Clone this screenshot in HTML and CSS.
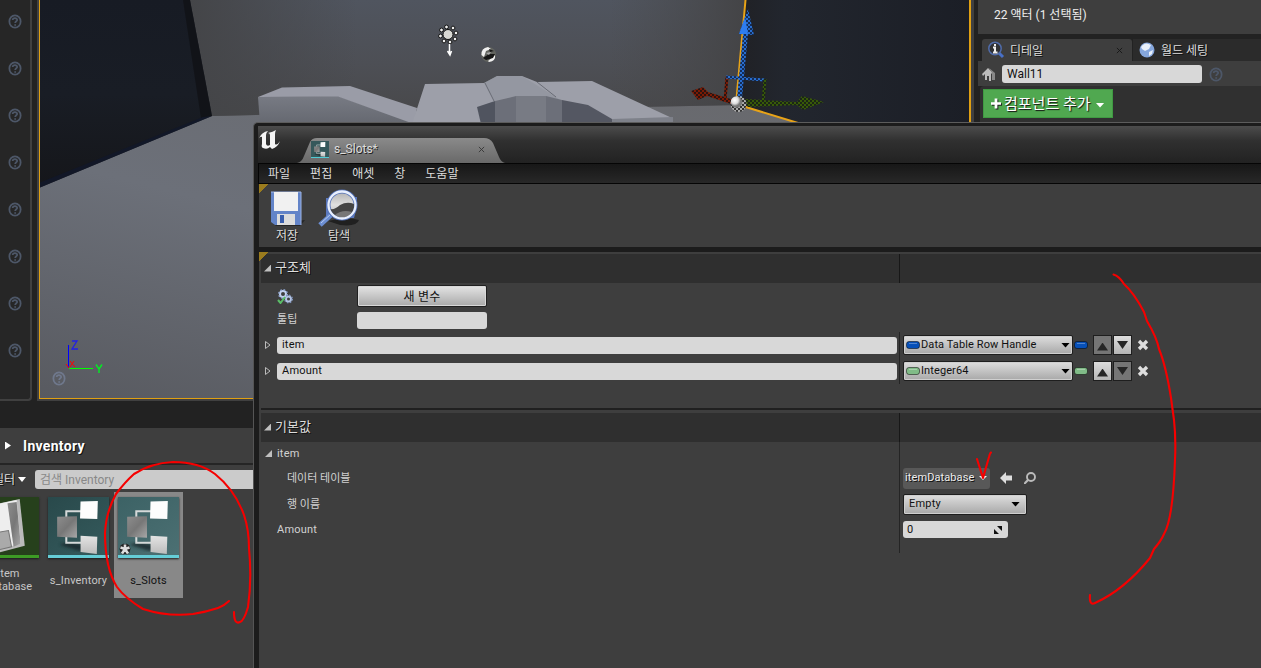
FILE: index.html
```html
<!DOCTYPE html>
<html lang="ko">
<head>
<meta charset="utf-8">
<title>s_Slots</title>
<link rel="stylesheet" href="styles.css">
</head>
<body>
<svg class="defs" width="0" height="0">
  <defs>
    <symbol id="help" viewBox="0 0 14 16"><ellipse cx="7" cy="8" rx="6" ry="6.600" fill="none" stroke="currentColor" stroke-width="1.900"/><path d="M4.500 6.400C4.700 3.800 9.500 3.900 9.300 6.400C9.200 7.900 7.200 7.700 7.200 9.700M7.200 10.800V12.500" fill="none" stroke="currentColor" stroke-width="1.900"/></symbol>
    <linearGradient id="node" x2="1" y2="1"><stop stop-color="#8d8d8d"/><stop offset=".5" stop-color="#777"/><stop offset="1" stop-color="#a8a8a8"/></linearGradient>
    <linearGradient id="pale" x2="0" y2="1"><stop stop-color="#e4e4e4"/><stop offset="1" stop-color="#bcbcbc"/></linearGradient>
    <filter id="soft"><feGaussianBlur stdDeviation="1.5"/></filter>
    <symbol id="struct" viewBox="0 0 60 57">
      <path d="M11 47Q21 42 39 49L31 53Z" fill="#142426" opacity=".75" filter="url(#soft)"/>
      <path d="M18 22V14H33M18 37V45H33" fill="none" stroke="#d5d9d9" stroke-width="2"/>
      <path d="M9 19.500L28.500 19L28.500 40L9 39Z" fill="url(#node)"/>
      <path d="M32 4.500L49 4L48.500 21.500L31.500 21Z" fill="#fdfdfd"/>
      <path d="M32 38L48.500 39L48 56L32 54Z" fill="url(#pale)"/>
    </symbol>
    <symbol id="pill" viewBox="0 0 14 8"><rect x=".5" y=".5" width="13" height="7" rx="2.500" fill="currentColor" stroke="#000" stroke-opacity=".5"/><path d="M3 2.500H11" stroke="#fff" stroke-opacity=".3"/></symbol>
    <symbol id="cross" viewBox="0 0 12 12"><path d="M2 2L10 10M10 2L2 10" stroke="#dedede" stroke-width="3.300"/></symbol>
  </defs>
</svg>
<main class="desktop">
  <div class="upper">
    <aside class="rail">
      <svg><use href="#help"/></svg><svg><use href="#help"/></svg><svg><use href="#help"/></svg><svg><use href="#help"/></svg><svg><use href="#help"/></svg><svg><use href="#help"/></svg><svg><use href="#help"/></svg><svg><use href="#help"/></svg>
    </aside>
    <section class="viewport">
      <svg class="scene" viewBox="40 0 929 398">
        <defs>
          <linearGradient id="back" x2="0" y2="1"><stop stop-color="#50555f"/><stop offset=".55" stop-color="#4d4f55"/><stop offset="1" stop-color="#48484a"/></linearGradient>
          <linearGradient id="backside" x2="1" y2="0"><stop stop-color="#444548"/><stop offset=".3" stop-color="#444548" stop-opacity="0"/><stop offset=".75" stop-color="#49494b" stop-opacity="0"/><stop offset="1" stop-color="#434345"/></linearGradient>
          <linearGradient id="leftwall" x2="0" y2="1"><stop stop-color="#171b24"/><stop offset=".5" stop-color="#191d25"/><stop offset="1" stop-color="#15161a"/></linearGradient>
          <linearGradient id="rightwall" x2="1" y2="0"><stop stop-color="#202125"/><stop offset=".2" stop-color="#22262e"/><stop offset="1" stop-color="#1b1e26"/></linearGradient>
          <linearGradient id="floor" x1=".8" x2="0" y1="0" y2="1"><stop stop-color="#68696d"/><stop offset=".5" stop-color="#6c7079"/><stop offset="1" stop-color="#585a60"/></linearGradient>
          <linearGradient id="box" x2="0" y2="1"><stop stop-color="#787b84"/><stop offset="1" stop-color="#656870"/></linearGradient>
          <pattern id="chkBlue" width="4" height="4" patternUnits="userSpaceOnUse"><path fill="#142d58" d="M0 0H4V4H0Z"/><path fill="#286ed0" d="M0 0H2V2H0ZM2 2H4V4H2Z"/></pattern>
          <pattern id="chkRed" width="4" height="4" patternUnits="userSpaceOnUse"><path fill="#2b1310" d="M0 0H4V4H0Z"/><path fill="#7b1b05" d="M0 0H2V2H0ZM2 2H4V4H2Z"/></pattern>
          <pattern id="chkGreen" width="4" height="4" patternUnits="userSpaceOnUse"><path fill="#1b2616" d="M0 0H4V4H0Z"/><path fill="#385a08" d="M0 0H2V2H0ZM2 2H4V4H2Z"/></pattern>
          <pattern id="chkGray" width="4" height="4" patternUnits="userSpaceOnUse"><path fill="#333" d="M0 0H4V4H0Z"/><path fill="#aaa" d="M0 0H2V2H0ZM2 2H4V4H2Z"/></pattern>
          <radialGradient id="orb" cx=".35" cy=".35"><stop stop-color="#fff"/><stop offset=".6" stop-color="#ddd"/><stop offset="1" stop-color="#777"/></radialGradient>
        </defs>
        <path fill="url(#floor)" d="M39 105H971V398H39Z"/>
        <path fill="url(#back)" d="M189 0H750L738 105L640 107L212 116Z"/>
        <path fill="url(#backside)" d="M189 0H750L738 105L640 107L212 116Z"/>
        <path fill="url(#leftwall)" d="M39 0H190L212 116L39 188Z"/>
        <path fill="#101115" d="M183 0H190L212 116L201 118Z" opacity=".8"/>
        <path fill="#11182a" d="M39 183L203 117L212 116L39 188Z" opacity=".8"/>
        <path fill="url(#rightwall)" d="M745 0H971V124H800L738 104Z"/>
        <path fill="url(#box)" d="M258 97L338 96L416 124H260Z"/>
        <path fill="#9a9ca7" d="M258 97L282 87.500L350 86L417 108L414 124L338 96.500Z"/>
        <path fill="#9d9fa9" d="M425 84L484 83L497 76H522L537 82L592 81L672 118V124H412Z"/>
        <path fill="#8a8d97" d="M484 83L497 76H522L562 101L545 96H516L494 101Z" opacity=".45"/>
        <path d="M485 83L494 101M537 82L556 97" stroke="#696c75" fill="none"/>
        <path fill="#50545f" d="M477 107L495 101V124H481Z"/>
        <path fill="#6c6f79" d="M495 101L516 96H546L562 100V124H495Z"/>
        <path fill="#787b84" d="M516 96H546V124H516Z"/>
        <path fill="#545762" d="M562 100L588 105L612 119V124H562Z"/>
        <path fill="#7e818a" d="M612 119L673 117V124H612Z"/>
        <path d="M745.500 0L736 104L798 123" fill="none" stroke="#e8a317" stroke-width="2"/>
        <g stroke="#111" stroke-width="1"><circle cx="448" cy="34.500" r="5" fill="#d8d8d4"/>
          <g fill="#eee"><circle cx="446.500" cy="27" r="1.900"/><circle cx="453" cy="28" r="1.900"/><circle cx="456" cy="33" r="1.900"/><circle cx="455" cy="39" r="1.900"/><circle cx="450" cy="42" r="1.900"/><circle cx="444" cy="41" r="1.900"/><circle cx="440.500" cy="36" r="1.900"/><circle cx="441.500" cy="30" r="1.900"/></g></g>
        <path d="M449.500 44V54M447.500 51L450 55L451.500 51" stroke="#fff" fill="none" stroke-width="1.500"/>
        <circle cx="488.500" cy="54.500" r="7.500" fill="#62645f"/><path d="M481.500 55Q481 48 488 47L491 49L486 51L484 57ZM488 61L495 55Q496 61 489 62Z" fill="#f0f0f0"/><path d="M483 58L489 54H495L493 58L486 60ZM489 49L494 51L490 52Z" fill="#161616"/><path d="M486 53L491 52L489 55Z" fill="#aaa"/>
        <g fill="none" stroke-width="3"><path d="M725 100L727 77" stroke="url(#chkRed)"/><path d="M726 77L765 80" stroke="url(#chkBlue)" /><path d="M765 79L763 103" stroke="url(#chkGreen)"/></g>
        <path fill="url(#chkRed)" d="M691 91L703 87L708 92L734 100L731 104L707 96L698 100Z"/>
        <path fill="url(#chkGreen)" d="M745 99L797 102L802 96L824 102L803 110L797 105L748 107Z"/>
        <path fill="url(#chkBlue)" d="M743 34H748L742 98H737ZM739 34L748 9L754 35Z"/><path fill="#2e7df0" d="M739 34L745 17L748 34Z"/>
        <circle cx="738.500" cy="104" r="8" fill="url(#chkGray)"/><circle cx="736.500" cy="102" r="5.800" fill="url(#orb)"/>
        <path d="M68.500 345V368" stroke="#00f"/><path d="M69 368.500H93" stroke="#0f0"/><path d="M66 364L69 368M70 367L74 361M70 361L75 367" stroke="red"/><path d="M72 341H77L72 349H78" fill="none" stroke="#2020e8" stroke-width="1.300"/><path d="M96 364.500L99 369V373M102 364.500L99 369" fill="none" stroke="#0e2" stroke-width="1.400"/>
        <use href="#help" x="52" y="371" width="14" height="15" color="#6f788c"/>
      </svg>
    </section>
    <aside class="details">
      <div class="actors">22 액터 (1 선택됨)</div>
      <div class="tabs">
        <div class="tab active"><svg class="i18" viewBox="0 0 18 18"><path d="M12 12L16 16" stroke="#4870c8" stroke-width="3"/><circle cx="8" cy="7.500" r="6.200" fill="#303236" stroke="#506caa" stroke-width="1.500"/><path d="M8 3V5M6 6.500H8V11M6 11.500H10.500" fill="none" stroke="#eee" stroke-width="2"/></svg><span>디테일</span><svg class="close" viewBox="0 0 8 8"><path d="M1 1L7 7M7 1L1 7" stroke="#161616"/></svg></div>
        <div class="tab"><svg class="i18" viewBox="0 0 18 18"><circle cx="9" cy="9" r="7.500" fill="#86a7dd"/><path d="M3 6Q7 0 13 4L11 8L7 10L4 8ZM11 11L15 9L14 13L11 15Z" fill="#e9f0fa"/></svg><span>월드 세팅</span></div>
      </div>
      <div class="namebar"><svg class="house" viewBox="0 0 14 15"><path d="M0 7L6 1L12 7L11 8L9 6V14H7V9H5V13H3V7L1 9Z" fill="#bbb"/><path d="M7 1L13 6V13H10V6Z" fill="#888"/></svg><div class="name">Wall11</div><svg class="help"><use href="#help"/></svg></div>
      <div class="component"><div class="add"><svg viewBox="0 0 11 11"><path d="M5.500 0V11M0 5.500H11" stroke="#fff" stroke-width="3"/></svg><span>컴포넌트 추가</span><i class="caret"></i></div></div>
    </aside>
  </div>
  <section class="browser">
    <div class="path"><i class="play"></i><b>Inventory</b></div>
    <div class="filter"><span class="flabel">필터</span><i class="caret"></i><div class="search">검색 Inventory</div></div>
    <div class="assets">
      <div class="asset first"><svg class="thumb table" viewBox="0 0 60 57"><path d="M4 10L41 2L46 48L8 58Z" fill="#bbb"/><path d="M3 10L38 3L42 46L7 55Z" fill="#eee"/><path d="M29 6L38 5L42 46L35 49Z" fill="url(#node)"/><path d="M18 35L30 33L33 49L20 52Z" fill="#aaa" stroke="#777"/></svg><span>item<br>Database</span></div>
      <div class="asset"><svg class="thumb"><use href="#struct"/></svg><span>s_Inventory</span></div>
      <div class="asset selected"><div class="dirty"><svg class="thumb"><use href="#struct"/></svg><svg class="star" viewBox="0 0 12 12"><path d="M6 1V11M1 4.500L11 7.500M11 4.500L1 7.500M3 10.500L9 1.500M9 10.500L3 1.500" stroke="#222" stroke-width="4"/><path d="M6 1.500V6M1.500 4.500L6 6L10.500 4.500M3 10.500L6 6L9 10.500" fill="none" stroke="#ddd" stroke-width="2.600"/></svg></div><span>s_Slots</span></div>
    </div>
  </section>

  <section class="window">
    <header class="title">
      <svg class="logo" viewBox="0 0 24 20"><path d="M1 8Q4 2 10 1Q8 3 8 5V14Q9 17 12 15V5Q12 3 10 3Q15 2 18 0Q17 2 17 4V14Q19 16 22 11Q20 17 14 19L12 17Q9 20 5 18Q3 17 4 14V7Q3 6 1 8Z" fill="#f5f5f5"/></svg>
      <svg class="tabshape" viewBox="0 0 208 25"><defs><linearGradient id="tabg" x2="0" y2="1"><stop stop-color="#8a8a8a"/><stop offset="1" stop-color="#696969"/></linearGradient></defs><path d="M0 25Q5 24 7 18L13 4Q15 0 20 0H187Q193 0 196 5L202 19Q204 24 208 25Z" fill="url(#tabg)"/></svg>
      <div class="tabtext"><svg class="mini"><use href="#struct"/></svg><span>s_Slots*</span><svg class="close" viewBox="0 0 8 8"><path d="M1 1L7 7M7 1L1 7" stroke="#333"/></svg></div>
    </header>
    <nav class="menu"><span>파일</span><span>편집</span><span>애셋</span><span>창</span><span>도움말</span></nav>
    <div class="toolbar">
      <div class="tool"><svg viewBox="0 0 42 38"><path d="M8 35L39 31L34 37H10Z" fill="#161616" opacity=".6"/><path d="M5 3H35V36H9L5 33Z" fill="#6384c8"/><path d="M5 3H35V36" fill="none" stroke="#9eb5e6"/><path d="M8 3H32V22H8Z" fill="#f1f1f1"/><path d="M11 25H29V36H11Z" fill="#dcdcdc"/><path d="M14 26H18V34H14Z" fill="#3a5fae"/></svg><span>저장</span></div>
      <div class="tool"><svg viewBox="0 0 42 38"><defs><linearGradient id="lens" x2="0" y2="1"><stop stop-color="#b0b0b0"/><stop offset=".5" stop-color="#e0e0e0"/><stop offset="1" stop-color="#aaa"/></linearGradient></defs><path d="M10 32Q28 27 41 31Q39 38 22 36Z" fill="#141414" opacity=".7"/><path d="M8 9H13V27H8ZM33 8H39V18L36 29H30Z" fill="#5b78bd"/><path d="M2 36L13 26" stroke="#6b8dd0" stroke-width="5"/><path d="M3 34L13 25" stroke="#b8caf0"/><circle cx="24" cy="16" r="13.500" fill="url(#lens)" stroke="#5674ba" stroke-width="4"/><path d="M12 20Q17 21 22 16Q29 12 36 15Q37 24 29 28Q17 31 12 20Z" fill="#454545"/><path d="M17 26Q24 20 34 23Q26 33 17 26Z" fill="#777"/><circle cx="24" cy="16" r="13.500" fill="none" stroke="#e8effd" stroke-width="2.300"/></svg><span>탐색</span></div>
    </div>
    <div class="panel">
      <div class="head top"><div class="left"><i class="open"></i><span>구조체</span></div><div class="right"></div></div>
      <div class="row newvar"><svg class="gears" viewBox="0 0 16 15"><circle cx="6" cy="5" r="3" fill="none" stroke="#c4d3ef" stroke-width="2"/><circle cx="6" cy="5" r="4.200" fill="none" stroke="#93a9d4" stroke-width="1.500" stroke-dasharray="1.600 1.700"/><circle cx="11.500" cy="10" r="2.500" fill="none" stroke="#b5c5e4" stroke-width="2"/><circle cx="11.500" cy="10" r="3.800" fill="none" stroke="#8498c1" stroke-width="1.400" stroke-dasharray="1.500 1.500"/><path d="M1 11L3.500 14L8 8" fill="none" stroke="#5bbd68" stroke-width="2"/></svg><div class="button">새 변수</div></div>
      <div class="row tip"><span>툴팁</span><div class="field"></div></div>
      <div class="row var"><div class="left"><svg class="tri" viewBox="0 0 6 8"><path d="M.5.5L5 4L.5 7.500Z" fill="none" stroke="#bbb"/></svg><div class="field">item</div></div><div class="right"><div class="combo type"><svg class="pill blue"><use href="#pill"/></svg><span>Data Table Row Handle</span><i class="caret"></i></div><svg class="pill blue solo"><use href="#pill"/></svg><div class="step off up"><i></i></div><div class="step down"><i></i></div><svg class="x"><use href="#cross"/></svg></div></div>
      <div class="row var"><div class="left"><svg class="tri" viewBox="0 0 6 8"><path d="M.5.5L5 4L.5 7.500Z" fill="none" stroke="#bbb"/></svg><div class="field">Amount</div></div><div class="right"><div class="combo type"><svg class="pill green"><use href="#pill"/></svg><span>Integer64</span><i class="caret"></i></div><svg class="pill green solo"><use href="#pill"/></svg><div class="step up"><i></i></div><div class="step off down"><i></i></div><svg class="x"><use href="#cross"/></svg></div></div>
      <div class="divider"></div>
      <div class="head"><div class="left"><i class="open"></i><span>기본값</span></div><div class="right"></div></div>
      <div class="row def short"><div class="left group"><i class="open"></i><span>item</span></div><div class="right"></div></div>
      <div class="row def"><div class="left deep">데이터 테이블</div><div class="right"><div class="assetpick"><span>itemDatabase</span><i class="caret"></i></div><svg class="back" viewBox="0 0 12 12"><path d="M0 6L6 0V3.500H12V8.500H6V12Z" fill="#dedede"/></svg><svg class="find" viewBox="0 0 12 12"><circle cx="7" cy="5" r="4" fill="none" stroke="#bbb" stroke-width="1.900"/><path d="M4 8L0 12" stroke="#bbb" stroke-width="2.200"/></svg></div></div>
      <div class="row def"><div class="left deep">행 이름</div><div class="right"><div class="combo empty"><span>Empty</span><i class="caret"></i></div></div></div>
      <div class="row def last"><div class="left amount">Amount</div><div class="right"><div class="field num"><span>0</span><svg viewBox="0 0 8 8"><path d="M3 0H8V5ZM0 3V8H5Z" fill="#111"/></svg></div></div></div>
    </div>
  </section>
  <svg class="marks" viewBox="0 0 1261 668" fill="none" stroke="#f60000" stroke-width="2.100" stroke-linecap="round" stroke-linejoin="round">
    <path d="M229 601Q224 606 218 608Q206 612 193 614Q168 617 143 609Q125 598 117 587Q105 568 105 533Q106 512 116 494Q125 482 134 474Q151 463 173 462Q199 462 215 474Q235 490 244 515Q249 530 249 548Q252 580 248 607Q244 621 240 622Q234 625 234 612"/>
    <path d="M1113.500 274.500Q1119 276 1124 284Q1134 293 1144 312L1147 321Q1157 338 1159 349Q1166 366 1171 398L1174 420Q1176 438 1175 460Q1173 519 1164 534Q1161 541 1154 549L1150 558Q1124 590 1095 603Q1089 606 1090 595"/>
    <path d="M977 459L983 478L989 457Q990 453 991 452.500"/>
  </svg>
</main>
</body>
</html>
```
FILE: styles.css
```css
* { box-sizing: border-box; }
body { margin: 0; background: #222; color: #ddd; font: 11px/14px Roboto, "Noto Sans CJK KR", sans-serif; }
.defs { position: absolute; }
svg { display: block; flex: none; }
i { display: block; flex: none; }
.desktop { position: relative; width: 1261px; height: 668px; overflow: hidden; display: flex; flex-direction: column; background: #222; }
.upper { display: flex; height: 401px; flex: none; }
.caret { width: 9px; height: 5px; background: currentColor; clip-path: polygon(0 0, 100% 0, 50% 100%); }

/* mode rail */
.rail { width: 32px; flex: none; display: flex; flex-direction: column; gap: 32px; padding: 14px 0 0 8px; background: #262626; border-right: 2px solid #404040; border-bottom: 2px solid #404040; border-radius: 0 0 4px 0; color: #4d5768; }
.rail svg { width: 14px; height: 15px; }

/* viewport */
.viewport { width: 937px; flex: none; margin-left: 5px; padding: 0 2px; background: #404040; height: 401px; }
.scene { width: 932px; height: 399px; border: 1px solid #e0a012; border-top: 0; border-right-width: 2px; }

/* details */
.details { flex: 1; margin-left: 4px; background: #222; display: flex; flex-direction: column; }
.actors { height: 34px; padding: 8px 16px; background: #3e3e3e; font-size: 12px; color: #eee; }
.tabs { display: flex; gap: 1px; margin-top: 5px; padding-left: 4px; height: 22px; }
.tab { display: flex; align-items: center; gap: 5px; width: 150px; padding: 0 9px 0 5px; background: #2b2b2b; font-size: 12px; text-shadow: 1px 1px #111; }
.tab span { padding-top: 1px; }
.tab:last-child { flex: 1; }
.tab.active { background: #3e3e3e; border-radius: 3px 3px 0 0; }
.i18 { width: 18px; height: 18px; }
.close { width: 7px; height: 7px; margin-left: auto; }
.namebar { display: flex; align-items: center; height: 25px; padding: 1px 0 0 4px; background: #3e3e3e; }
.house { width: 14px; height: 15px; margin-right: 6px; }
.name { width: 200px; height: 18px; padding: 2px 5px; border-radius: 3px; background: #d8d8d8; color: #111; font-size: 12px; }
.help { width: 14px; height: 15px; margin-left: 7px; color: #4d5768; }
.component { flex: 1; margin-left: 2px; padding: 3px; background: #303030; border-radius: 4px; }
.add { display: flex; align-items: center; gap: 3px; width: 130px; height: 29px; padding-left: 7px; border: 1px solid #3f9a42; background: #50a850; color: #fff; font-size: 15px; line-height: 20px; text-shadow: 1px 1px 1px #111; }
.add svg { width: 10px; height: 11px; filter: drop-shadow(1px 1px #222); }
.add span { white-space: nowrap; }
.add .caret { margin: 3px 0 0 2px; }

/* content browser */
.browser { width: 260px; margin-top: 27px; flex: 1; background: #3e3e3e; }
.path { height: 37px; display: flex; align-items: center; gap: 13px; padding: 0 0 2px 5px; color: #fff; font-size: 14px; text-shadow: 1px 1px #111; }
.path b { font-weight: 700; letter-spacing: .3px; }
.play { width: 6px; height: 8px; margin-right: -1px; background: #fff; clip-path: polygon(0 0, 100% 50%, 0 100%); }
.filter { display: flex; align-items: center; height: 29px; margin-top: -2px; padding-top: 2px; border-top: 2px solid #252525; font-size: 12px; }
.flabel { width: 15px; display: flex; justify-content: flex-end; white-space: nowrap; text-shadow: 1px 1px #111; }
.filter .caret { margin: 0 9px 0 3px; width: 8px; color: #fff; }
.search { flex: 1; height: 19px; padding: 3px 5px; border-radius: 3px; background: #cbcbcb; color: #888; white-space: nowrap; }
.assets { display: flex; }
.asset { width: 69px; height: 106px; flex: none; display: flex; flex-direction: column; align-items: center; padding: 5px 4px 0; margin-right: 1px; text-align: center; color: #c7c7c7; line-height: 13px; }
.asset.first { margin-left: -26px; }
.asset span { margin-top: 16px; letter-spacing: .15px; }
.asset.first span { margin-top: 9px; }
.thumb { width: 61px; height: 61px; background: linear-gradient(145deg, #29494b, #355b5d); border-bottom: 3px solid #65cdd7; box-shadow: 0 1px 2px #1b1b1b; }
.thumb.table { background: #26401c; border-color: #3d9b25; }
.selected { background: #888; color: #111; }
.selected .thumb { background: linear-gradient(145deg, #3c6265, #4c7073); }
.dirty { display: grid; }
.dirty > * { grid-area: 1 / 1; }
.star { width: 12px; height: 12px; place-self: end start; margin: 0 0 3px 1px; }

/* floating asset editor */
.window { position: absolute; left: 253px; top: 122px; width: 1010px; height: 560px; padding-left: 4px; border: 1px solid #5c5c5c; border-radius: 5px 0 0 0; background: #1c1c1c; display: flex; flex-direction: column; border-left-color: #555; }
.title { display: grid; grid-template-columns: 39px 208px 1fr; height: 40px; padding-top: 3px; border-top: 3px solid #1c1c1c; background: linear-gradient(#4c4c4c, #303030 40%, #222); flex: none; }
.logo { width: 24px; height: 20px; margin: 1px 0 0 0; }
.tabshape { grid-area: 1 / 2; width: 208px; height: 25px; margin-top: 9px; }
.tabtext { grid-area: 1 / 2; display: flex; align-items: center; height: 23px; margin-top: 9px; padding: 0 20px 0 14px; font-size: 12px; color: #ddd; text-shadow: 1px 1px #222; }
.tabtext span { margin: -1px 0 0 5px; }
.mini { width: 18px; height: 17px; background: #36585b; border-bottom: 1px solid #50cbd5; }
.menu { display: flex; align-items: center; gap: 20px; height: 21px; flex: none; padding-left: 9px; background: linear-gradient(#171717, #282828); border: 1px solid #050505; font-size: 12px; }
.toolbar { height: 63px; flex: none; display: flex; gap: 10px; padding: 5px 0 0 7px; margin-left: 1px; background: linear-gradient(135deg, #9b7c1e 7px, #3e3e3e 7px); }
.tool { width: 42px; text-align: center; font-size: 12px; text-shadow: 1px 1px #111; display: flex; flex-direction: column; gap: 2px; }
.tool svg { width: 42px; height: 38px; }
.panel { flex: 1; margin: 5px 0 0 1px; padding: 2px 0 0 2px; background: linear-gradient(135deg, #9b7c1e 7px, #3e3e3e 7px); }
.head { display: grid; grid-template-columns: 638px 1fr; height: 29px; background: #2f2f2f; font-size: 13px; text-shadow: 1px 1px #111; }
.head.top { background: linear-gradient(135deg, #9b7c1e 4px, #2f2f2f 4px); }
.left, .right { display: flex; align-items: center; }
.right { border-left: 1px solid #242424; padding-left: 3px; }
.head .right { border-color: #171717; }
.head .left { padding: 0 0 1px 3px; gap: 4px; }
.open { width: 7px; height: 7px; background: #c0c0c0; clip-path: polygon(100% 0, 100% 100%, 0 100%); }
.row { display: grid; grid-template-columns: 638px 1fr; height: 26px; color: #d1d1d1; letter-spacing: .2px; }
.newvar, .tip { display: flex; align-items: center; padding-left: 16px; }
.gears { width: 16px; height: 15px; margin-right: 64px; }
.button { width: 130px; height: 22px; border: 1px solid #202020; border-radius: 2px; background: linear-gradient(#e4e4e4, #a9a9a9); box-shadow: inset 0 0 0 1px #d8d8d8; color: #111; text-align: center; font-size: 12px; line-height: 22px; }
.tip { height: 23px; }
.tip span { width: 80px; padding-bottom: 2px; }
.field { height: 17px; padding: 1px 5px; border-radius: 3px; background: #d8d8d8; color: #111; line-height: 14px; }
.tip .field { width: 130px; }
.var .left { padding: 0 2px 0 4px; gap: 6px; }
.var .left .field { flex: 1; }
.tri { width: 6px; height: 8px; }
.combo { display: flex; align-items: center; height: 20px; border: 1px solid #1e1e1e; border-radius: 2px; background: linear-gradient(#dedede, #a8a8a8); box-shadow: inset 0 0 0 1px #cfcfcf; color: #111; }
.type { width: 170px; padding: 0 2px 0 2px; }
.type span { margin-left: 1px; white-space: nowrap; letter-spacing: .1px; }
.combo .caret { margin-left: auto; color: #000; }
.pill { width: 14px; height: 8px; }
.pill.solo { margin: 0 5px 0 1px; }
.blue { color: #0750b8; }
.green { color: #80bb87; }
.step { display: flex; align-items: center; justify-content: center; width: 19px; height: 20px; margin-right: 1px; border: 1px solid #1e1e1e; background: linear-gradient(#ddd, #b5b5b5); }
.step i { width: 11px; height: 8px; background: #262626; clip-path: polygon(50% 0, 100% 100%, 0 100%); }
.step.up i { margin-top: 3px; }
.step.down i { transform: scaleY(-1); }
.step.off { background: #757575; }
.x { width: 12px; height: 12px; margin-left: 4px; }
.divider { height: 2px; margin: 24px 0 3px; background: #202020; }
.row.short { height: 23px; }
.group { padding-left: 4px; gap: 5px; }
.deep { padding: 1px 0 0 26px; letter-spacing: 0; }
.amount { padding-left: 16px; padding-bottom: 10px; }
.row.last { height: 36px; }
.last .right { align-items: flex-start; padding-top: 4px; }
.assetpick { display: flex; align-items: center; width: 87px; height: 21px; padding: 0 3px 0 2px; border-radius: 3px; background: #585858; color: #eee; text-shadow: 1px 1px #111; letter-spacing: .1px; }
.assetpick .caret { width: 8px; height: 4px; margin-left: auto; }
.back { width: 12px; height: 12px; margin: 0 12px 0 10px; }
.find { width: 12px; height: 12px; }
.empty { width: 124px; height: 21px; padding: 0 6px 0 5px; }
.num { display: flex; align-items: center; width: 105px; padding: 0 6px 0 4px; }
.num svg { width: 8px; height: 8px; margin-left: auto; }

/* pen marks */
.marks { position: absolute; left: 0; top: 0; width: 1261px; height: 668px; pointer-events: none; }
```
